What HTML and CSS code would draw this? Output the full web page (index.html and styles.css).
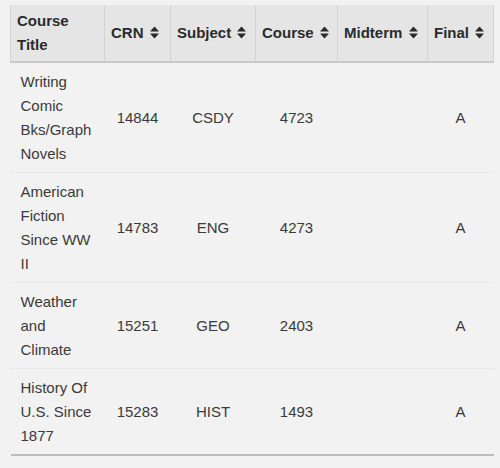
FILE: index.html
```html
<!DOCTYPE html>
<html>
<head>
<meta charset="utf-8">
<link rel="stylesheet" href="styles.css">
</head>
<body>
<table class="grades">
  <colgroup>
    <col class="c-title">
    <col class="c-crn">
    <col class="c-subj">
    <col class="c-course">
    <col class="c-mid">
    <col class="c-final">
  </colgroup>
  <thead>
    <tr>
      <th>Course Title</th>
      <th>CRN <svg class="sort" viewBox="0 0 9 13" width="9" height="13"><path d="M0.6 5.4 Q0 5.4 0.4 4.9 L4 0.9 Q4.5 0.4 5 0.9 L8.6 4.9 Q9 5.4 8.4 5.4 Z M0.6 7.6 Q0 7.6 0.4 8.1 L4 12.1 Q4.5 12.6 5 12.1 L8.6 8.1 Q9 7.6 8.4 7.6 Z"/></svg></th>
      <th>Subject <svg class="sort" viewBox="0 0 9 13" width="9" height="13"><path d="M0.6 5.4 Q0 5.4 0.4 4.9 L4 0.9 Q4.5 0.4 5 0.9 L8.6 4.9 Q9 5.4 8.4 5.4 Z M0.6 7.6 Q0 7.6 0.4 8.1 L4 12.1 Q4.5 12.6 5 12.1 L8.6 8.1 Q9 7.6 8.4 7.6 Z"/></svg></th>
      <th>Course <svg class="sort" viewBox="0 0 9 13" width="9" height="13"><path d="M0.6 5.4 Q0 5.4 0.4 4.9 L4 0.9 Q4.5 0.4 5 0.9 L8.6 4.9 Q9 5.4 8.4 5.4 Z M0.6 7.6 Q0 7.6 0.4 8.1 L4 12.1 Q4.5 12.6 5 12.1 L8.6 8.1 Q9 7.6 8.4 7.6 Z"/></svg></th>
      <th>Midterm <svg class="sort" viewBox="0 0 9 13" width="9" height="13"><path d="M0.6 5.4 Q0 5.4 0.4 4.9 L4 0.9 Q4.5 0.4 5 0.9 L8.6 4.9 Q9 5.4 8.4 5.4 Z M0.6 7.6 Q0 7.6 0.4 8.1 L4 12.1 Q4.5 12.6 5 12.1 L8.6 8.1 Q9 7.6 8.4 7.6 Z"/></svg></th>
      <th>Final <svg class="sort" viewBox="0 0 9 13" width="9" height="13"><path d="M0.6 5.4 Q0 5.4 0.4 4.9 L4 0.9 Q4.5 0.4 5 0.9 L8.6 4.9 Q9 5.4 8.4 5.4 Z M0.6 7.6 Q0 7.6 0.4 8.1 L4 12.1 Q4.5 12.6 5 12.1 L8.6 8.1 Q9 7.6 8.4 7.6 Z"/></svg></th>
    </tr>
  </thead>
  <tbody>
    <tr>
      <td class="title">Writing Comic Bks/Graph Novels</td>
      <td>14844</td>
      <td>CSDY</td>
      <td>4723</td>
      <td></td>
      <td>A</td>
    </tr>
    <tr>
      <td class="title">American Fiction Since WW II</td>
      <td>14783</td>
      <td>ENG</td>
      <td>4273</td>
      <td></td>
      <td>A</td>
    </tr>
    <tr>
      <td class="title">Weather and Climate</td>
      <td>15251</td>
      <td>GEO</td>
      <td>2403</td>
      <td></td>
      <td>A</td>
    </tr>
    <tr>
      <td class="title">History Of U.S. Since 1877</td>
      <td>15283</td>
      <td>HIST</td>
      <td>1493</td>
      <td></td>
      <td>A</td>
    </tr>
  </tbody>
</table>
</body>
</html>
```

FILE: styles.css
```css
html, body {
  margin: 0;
  padding: 0;
  background: #f2f2f2;
}

body {
  font-family: "Liberation Sans", Arial, Helvetica, sans-serif;
  font-size: 15px;
  line-height: 24px;
  color: #3a3a3a;
}

.grades {
  margin: 5px 0 0 10px;
  width: 483px;
  border-collapse: collapse;
  table-layout: fixed;
}

.c-title { width: 94px; }
.c-crn { width: 66px; }
.c-subj { width: 85px; }
.c-course { width: 82px; }
.c-mid { width: 90px; }
.c-final { width: 66px; }

.grades th {
  background: #e5e5e5;
  color: #2b2b2b;
  font-weight: bold;
  text-align: left;
  vertical-align: middle;
  padding: 4px 6px;
  border-left: 1px solid #d3d3d3;
  border-right: 1px solid #d3d3d3;
  border-bottom: 2px solid #c9c9c9;
}

.sort {
  fill: #2b2b2b;
  vertical-align: -1px;
  margin-left: 2px;
}

.grades td {
  padding: 7px 10px 6px;
  text-align: center;
  vertical-align: middle;
  border-top: 1px solid #e6e6e6;
}

.grades td.title {
  text-align: left;
}

.grades tbody tr:last-child td {
  border-bottom: 2px solid #bdbdbd;
}
```
